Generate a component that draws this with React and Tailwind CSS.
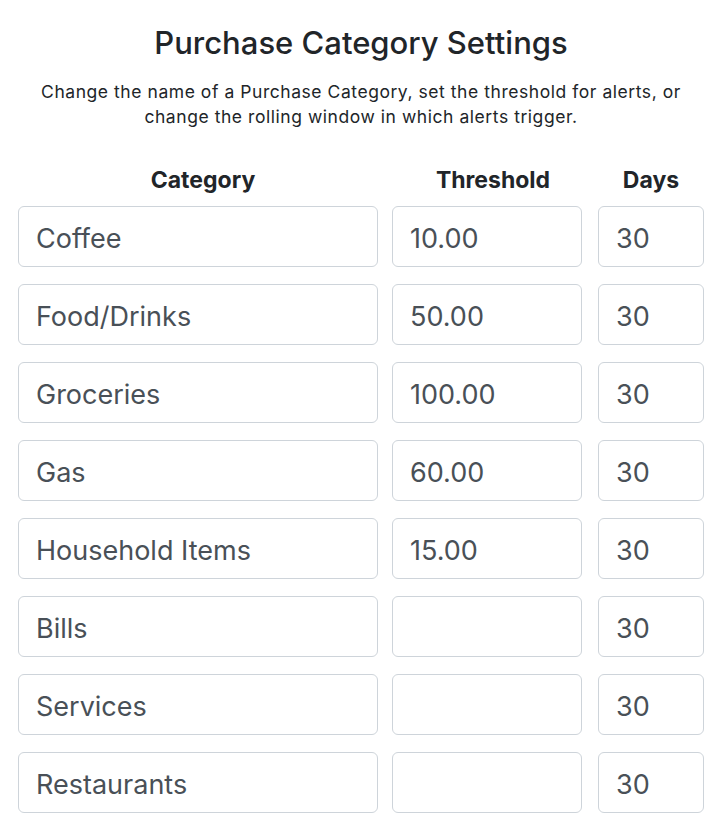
import { useState } from 'react';

const initialRows = [
  { name: 'Coffee', threshold: '10.00', days: '30' },
  { name: 'Food/Drinks', threshold: '50.00', days: '30' },
  { name: 'Groceries', threshold: '100.00', days: '30' },
  { name: 'Gas', threshold: '60.00', days: '30' },
  { name: 'Household Items', threshold: '15.00', days: '30' },
  { name: 'Bills', threshold: '', days: '30' },
  { name: 'Services', threshold: '', days: '30' },
  { name: 'Restaurants', threshold: '', days: '30' },
];

const inputClass =
  'h-[61px] rounded-md border-[1.5px] border-[#ced4da] bg-white px-[17px] pt-[4px] text-[27px] text-[#495057] outline-none';

const App = () => {
  const [rows, setRows] = useState(initialRows);

  const update = (i, field, value) => {
    setRows(prev => prev.map((r, idx) => (idx === i ? { ...r, [field]: value } : r)));
  };

  return (
    <div className="min-h-screen bg-white font-['Inter',sans-serif] text-[#212529]">
      <div className="pl-[18px] pr-[22px] pt-[24px]">
        {/* Header */}
        <h1 className="text-center text-[31px] font-medium leading-[38px]">Purchase Category Settings</h1>
        <p className="mx-auto mt-[17px] max-w-[670px] text-center text-[17.5px] leading-[25px] tracking-[0.55px]">
          Change the name of a Purchase Category, set the threshold for alerts, or change the rolling window in which alerts trigger.
        </p>

        {/* Column headings */}
        <div className="mt-[36px] flex text-[23px] font-bold leading-[30px]">
          <div className="w-[370px] text-center">Category</div>
          <div className="ml-[4px] w-[202px] text-center">Threshold</div>
          <div className="ml-[4px] w-[106px] text-center">Days</div>
        </div>

        {/* Rows */}
        <div className="mt-[11px] flex flex-col gap-[17px]">
          {rows.map((row, i) => (
            <div key={i} className="flex">
              <input className={`${inputClass} w-[360px]`} value={row.name} onChange={e => update(i, 'name', e.target.value)} />
              <input className={`${inputClass} ml-[14px] w-[190px]`} value={row.threshold} onChange={e => update(i, 'threshold', e.target.value)} />
              <input className={`${inputClass} ml-[16px] w-[106px]`} value={row.days} onChange={e => update(i, 'days', e.target.value)} />
            </div>
          ))}
        </div>
      </div>
    </div>
  );
};

export default App;
